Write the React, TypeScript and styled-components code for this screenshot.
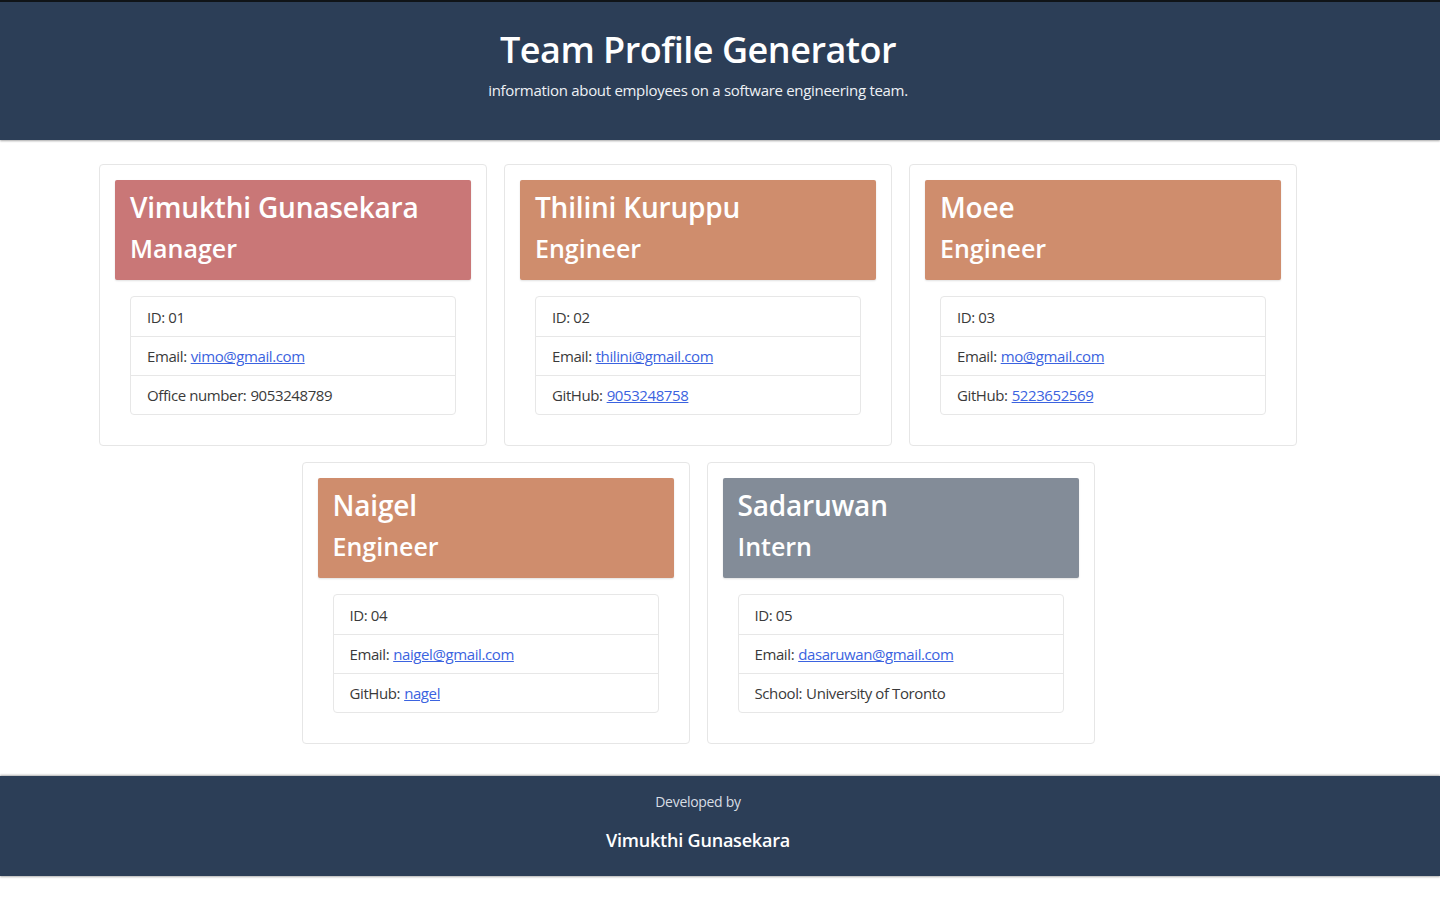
import React from "react";
import styled, { createGlobalStyle } from "styled-components";

const Global = createGlobalStyle`
  html, body { margin: 0; padding: 0; background: #ffffff; }
  body { font-family: "Open Sans", "Noto Sans", "Liberation Sans", sans-serif; }
  * { box-sizing: border-box; }
`;

const Page = styled.div`
  min-height: 900px;
  display: flex;
  flex-direction: column;
  border-bottom: 1px solid #e6e6e6;
`;

const Header = styled.header`
  height: 140px;
  background: #2c3e57;
  border-top: 2px solid #101418;
  box-shadow: 0 1px 2px rgba(0, 0, 0, 0.35);
  display: flex;
  flex-direction: column;
  align-items: center;
  padding: 25px 44px 0 0;
  color: #ffffff;
`;

const Title = styled.h1`
  margin: 0;
  font-size: 36px;
  font-weight: 600;
  line-height: 46px;
  letter-spacing: -0.5px;
`;

const Subtitle = styled.p`
  margin: 8px 0 0;
  font-size: 15px;
  line-height: 18px;
  letter-spacing: -0.3px;
  color: #eef1f5;
`;

const Main = styled.main`
  display: flex;
  flex-wrap: wrap;
  justify-content: center;
  gap: 16px 17px;
  padding: 24px 44px 32px 0;
  max-width: 1440px;
`;

const Card = styled.section`
  width: 388px;
  border: 1px solid #e6e6e6;
  border-radius: 4px;
  padding: 15px 15px 30px;
  background: #fff;
`;

const CardHead = styled.div<{ $bg: string }>`
  height: 100px;
  background: ${(p) => p.$bg};
  border-radius: 2px;
  box-shadow: 0 1px 2px rgba(0, 0, 0, 0.12);
  padding: 6px 15px 0;
  color: #ffffff;
  display: flex;
  flex-direction: column;
`;

const Name = styled.h2`
  margin: 0;
  font-size: 28px;
  font-weight: 600;
  line-height: 42px;
  letter-spacing: -0.2px;
`;

const Role = styled.h3`
  margin: 0;
  font-size: 25px;
  font-weight: 600;
  line-height: 40px;
  letter-spacing: 0px;
`;

const List = styled.ul`
  list-style: none;
  margin: 16px 15px 0;
  padding: 0;
  border: 1px solid #e7e7e7;
  border-radius: 4px;
`;

const Item = styled.li`
  height: 39px;
  display: flex;
  align-items: center;
  padding: 0 16px;
  font-size: 15px;
  color: #3a3a3a;
  letter-spacing: -0.4px;
  & + & { border-top: 1px solid #e7e7e7; }
`;

const Link = styled.a`
  color: #3b63e0;
  text-decoration: underline;
  margin-left: 4px;
`;

const Plain = styled.span`
  margin-left: 4px;
`;

const Footer = styled.footer`
  margin-top: auto;
  margin-bottom: 24px;
  height: 100px;
  background: #2c3e57;
  box-shadow: 0 -1px 2px rgba(0, 0, 0, 0.3), 0 1px 2px rgba(0, 0, 0, 0.3);
  display: flex;
  flex-direction: column;
  align-items: center;
  padding: 17px 44px 0 0;
  color: #ffffff;
`;

const Dev = styled.p`
  margin: 0;
  font-size: 14px;
  line-height: 18px;
  color: #d8dde4;
  letter-spacing: -0.3px;
`;

const DevName = styled.p`
  margin: 17px 0 0;
  font-size: 18px;
  line-height: 24px;
  font-weight: 600;
  letter-spacing: -0.2px;
`;

type Member = {
  name: string;
  role: "Manager" | "Engineer" | "Intern";
  id: string;
  email: string;
  extraLabel: string;
  extra: string;
  extraLink: boolean;
};

const colors: Record<Member["role"], string> = {
  Manager: "#c97777",
  Engineer: "#cf8d6d",
  Intern: "#838c98",
};

const team: Member[] = [
  { name: "Vimukthi Gunasekara", role: "Manager", id: "01", email: "vimo@gmail.com", extraLabel: "Office number:", extra: "9053248789", extraLink: false },
  { name: "Thilini Kuruppu", role: "Engineer", id: "02", email: "thilini@gmail.com", extraLabel: "GitHub:", extra: "9053248758", extraLink: true },
  { name: "Moee", role: "Engineer", id: "03", email: "mo@gmail.com", extraLabel: "GitHub:", extra: "5223652569", extraLink: true },
  { name: "Naigel", role: "Engineer", id: "04", email: "naigel@gmail.com", extraLabel: "GitHub:", extra: "nagel", extraLink: true },
  { name: "Sadaruwan", role: "Intern", id: "05", email: "dasaruwan@gmail.com", extraLabel: "School:", extra: "University of Toronto", extraLink: false },
];

export default function App() {
  return (
    <>
      <Global />
      <Page>
        <Header>
          <Title>Team Profile Generator</Title>
          <Subtitle>information about employees on a software engineering team.</Subtitle>
        </Header>
        <Main>
          {team.map((m) => (
            <Card key={m.id}>
              <CardHead $bg={colors[m.role]}>
                <Name>{m.name}</Name>
                <Role>{m.role}</Role>
              </CardHead>
              <List>
                <Item>ID: {m.id}</Item>
                <Item>
                  Email:<Link href={`mailto:${m.email}`}>{m.email}</Link>
                </Item>
                <Item>
                  {m.extraLabel}
                  {m.extraLink ? (
                    <Link href={`https://github.com/${m.extra}`}>{m.extra}</Link>
                  ) : (
                    <Plain>{m.extra}</Plain>
                  )}
                </Item>
              </List>
            </Card>
          ))}
        </Main>
        <Footer>
          <Dev>Developed by</Dev>
          <DevName>Vimukthi Gunasekara</DevName>
        </Footer>
      </Page>
    </>
  );
}
